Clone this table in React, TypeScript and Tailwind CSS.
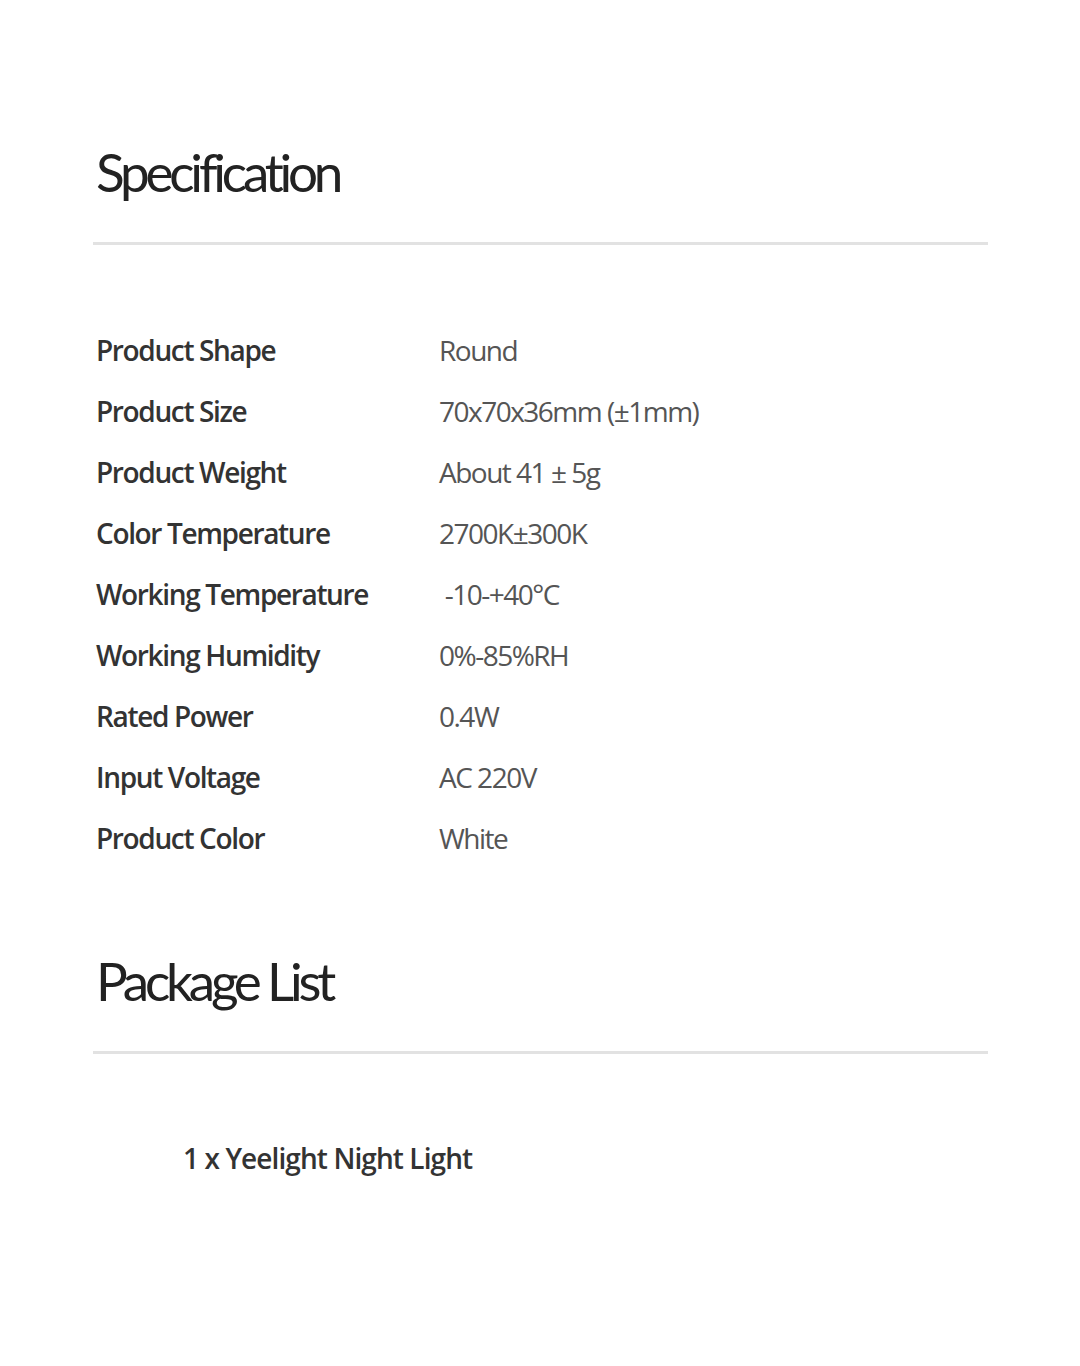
import React from "react";

const rows: [string, string][] = [
  ["Product Shape", "Round"],
  ["Product Size", "70x70x36mm (±1mm)"],
  ["Product Weight", "About 41 ± 5g"],
  ["Color Temperature", "2700K±300K"],
  ["Working Temperature", "\u00a0-10-+40°C"],
  ["Working Humidity", "0%-85%RH"],
  ["Rated Power", "0.4W"],
  ["Input Voltage", "AC 220V"],
  ["Product Color", "White"],
];

export default function App() {
  return (
    <div
      className="w-[1080px] h-[1366px] bg-white text-[#333]"
      style={{ fontFamily: '"Open Sans", "Noto Sans", sans-serif' }}
    >
      <div className="pt-[136px] pl-[93px] pr-[92px]">
        <h1
          className="text-[53px] leading-[72px] tracking-[-4.2px] font-normal text-[#222] pl-[3px]"
          style={{ fontFamily: 'Lato, "Open Sans", sans-serif' }}
        >
          Specification
        </h1>
        <div className="mt-[34px] h-[3px] bg-[#e2e2e2]" />
        <div className="mt-[74px] pl-[3px]">
          {rows.map(([k, v]) => (
            <div key={k} className="flex h-[61px] items-center">
              <div className="w-[343px] text-[28px] font-semibold tracking-[-1.35px] text-[#333]">
                {k}
              </div>
              <div className="text-[28px] font-normal tracking-[-1.5px] text-[#555]">
                {v}
              </div>
            </div>
          ))}
        </div>
        <h2
          className="mt-[77px] text-[53px] leading-[72px] tracking-[-4.2px] font-normal text-[#222] pl-[3px]"
          style={{ fontFamily: 'Lato, "Open Sans", sans-serif' }}
        >
          Package List
        </h2>
        <div className="mt-[34px] h-[3px] bg-[#e2e2e2]" />
        <div className="mt-[83px] pl-[90px] text-[28px] font-semibold tracking-[-0.9px] text-[#333]">
          1 x Yeelight Night Light
        </div>
      </div>
    </div>
  );
}
